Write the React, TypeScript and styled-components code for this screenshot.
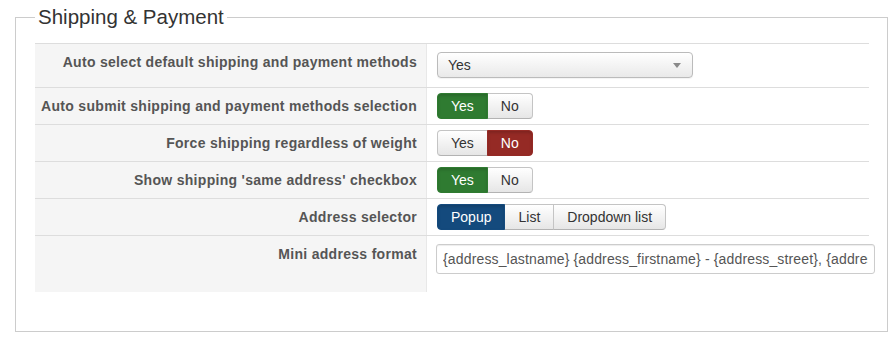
import React from "react";
import styled, { createGlobalStyle, css } from "styled-components";

const GlobalStyle = createGlobalStyle`
  html, body {
    margin: 0;
    padding: 0;
    background: #ffffff;
    font-family: "Liberation Sans", Arial, sans-serif;
  }
`;

const Page = styled.div`
  padding: 5px 0 0 15px;
  width: 873px;
`;

const Fieldset = styled.fieldset`
  margin: 0;
  min-width: 0;
  box-sizing: border-box;
  width: 873px;
  border: 1px solid #cccccc;
  padding: 14px 18px 39px 19px;
`;

const Legend = styled.legend`
  padding: 0 3px;
  font-size: 20.5px;
  line-height: 24px;
  color: #333333;
`;

const Table = styled.div`
  display: flex;
  flex-direction: column;
`;

const Row = styled.div`
  display: grid;
  grid-template-columns: 392px 1fr;
  border-top: 1px solid #dddddd;
`;

const Label = styled.div`
  background: #f5f5f5;
  border-right: 1px solid #e8e8e8;
  padding: 9px 9px 0 0;
  text-align: right;
  font-size: 14px;
  letter-spacing: 0.3px;
  font-weight: bold;
  line-height: 18px;
  color: #555555;
  white-space: nowrap;
`;

const Control = styled.div<{ $top: number; $bottom: number }>`
  padding: ${(p) => p.$top}px 0 ${(p) => p.$bottom}px 10px;
  display: flex;
  align-items: flex-start;
  min-width: 0;
`;

const SelectBox = styled.div`
  box-sizing: border-box;
  width: 256px;
  height: 26px;
  border: 1px solid #bbbbbb;
  border-radius: 4px;
  background: linear-gradient(#ffffff, #e9e9e9);
  box-shadow: 0 1px 1px rgba(0, 0, 0, 0.05);
  display: flex;
  align-items: center;
  justify-content: space-between;
  padding: 0 11px 0 10px;
  font-size: 14px;
  color: #333333;
`;

const Group = styled.div`
  display: flex;
`;

type Variant = "success" | "danger" | "primary";

const activeColors: Record<Variant, string> = {
  success: "#2f7b31",
  danger: "#952a25",
  primary: "#144a7d",
};

const Btn = styled.button<{ $active?: Variant }>`
  box-sizing: border-box;
  height: 26px;
  margin: 0;
  padding: 0 13px;
  font-family: inherit;
  font-size: 14px;
  line-height: 24px;
  border: 1px solid #c4c4c4;
  border-bottom-color: #b3b3b3;
  background: linear-gradient(#ffffff, #e6e6e6);
  color: #333333;
  border-radius: 0;
  cursor: pointer;
  & + & {
    margin-left: -1px;
  }
  &:first-child {
    border-radius: 4px 0 0 4px;
  }
  &:last-child {
    border-radius: 0 4px 4px 0;
  }
  ${(p) =>
    p.$active &&
    css`
      background: ${activeColors[p.$active]};
      border-color: ${activeColors[p.$active]};
      color: #ffffff;
      box-shadow: inset 0 2px 3px rgba(0, 0, 0, 0.15);
      position: relative;
      z-index: 1;
    `}
`;

const TextInput = styled.input`
  box-sizing: border-box;
  flex-shrink: 0;
  width: 439px;
  height: 30px;
  margin: 0 0 0 -1px;
  padding: 0 6px;
  border: 1px solid #cccccc;
  border-radius: 3px;
  box-shadow: inset 0 1px 1px rgba(0, 0, 0, 0.075);
  font-family: inherit;
  font-size: 14px;
  letter-spacing: 0.15px;
  color: #555555;
  background: #ffffff;
  outline: none;
`;

const Caret = () => (
  <svg width="8" height="5" viewBox="0 0 8 5">
    <path d="M0 0 H8 L4 5 Z" fill="#8a8a8a" />
  </svg>
);

type Option = { label: string; active?: Variant };

const Toggle = ({ options }: { options: Option[] }) => (
  <Group>
    {options.map((o) => (
      <Btn key={o.label} $active={o.active}>
        {o.label}
      </Btn>
    ))}
  </Group>
);

export default function App() {
  return (
    <>
      <GlobalStyle />
      <Page>
        <Fieldset>
          <Legend>Shipping &amp; Payment</Legend>
          <Table>
            <Row>
              <Label>Auto select default shipping and payment methods</Label>
              <Control $top={8} $bottom={9}>
                <SelectBox>
                  <span>Yes</span>
                  <Caret />
                </SelectBox>
              </Control>
            </Row>
            <Row>
              <Label>Auto submit shipping and payment methods selection</Label>
              <Control $top={5} $bottom={5}>
                <Toggle options={[{ label: "Yes", active: "success" }, { label: "No" }]} />
              </Control>
            </Row>
            <Row>
              <Label>Force shipping regardless of weight</Label>
              <Control $top={5} $bottom={5}>
                <Toggle options={[{ label: "Yes" }, { label: "No", active: "danger" }]} />
              </Control>
            </Row>
            <Row>
              <Label>Show shipping 'same address' checkbox</Label>
              <Control $top={5} $bottom={5}>
                <Toggle options={[{ label: "Yes", active: "success" }, { label: "No" }]} />
              </Control>
            </Row>
            <Row>
              <Label>Address selector</Label>
              <Control $top={5} $bottom={5}>
                <Toggle
                  options={[
                    { label: "Popup", active: "primary" },
                    { label: "List" },
                    { label: "Dropdown list" },
                  ]}
                />
              </Control>
            </Row>
            <Row>
              <Label>Mini address format</Label>
              <Control $top={8} $bottom={18}>
                <TextInput
                  readOnly
                  value="{address_lastname} {address_firstname} - {address_street}, {address_zip} {address_city}"
                />
              </Control>
            </Row>
          </Table>
        </Fieldset>
      </Page>
    </>
  );
}
